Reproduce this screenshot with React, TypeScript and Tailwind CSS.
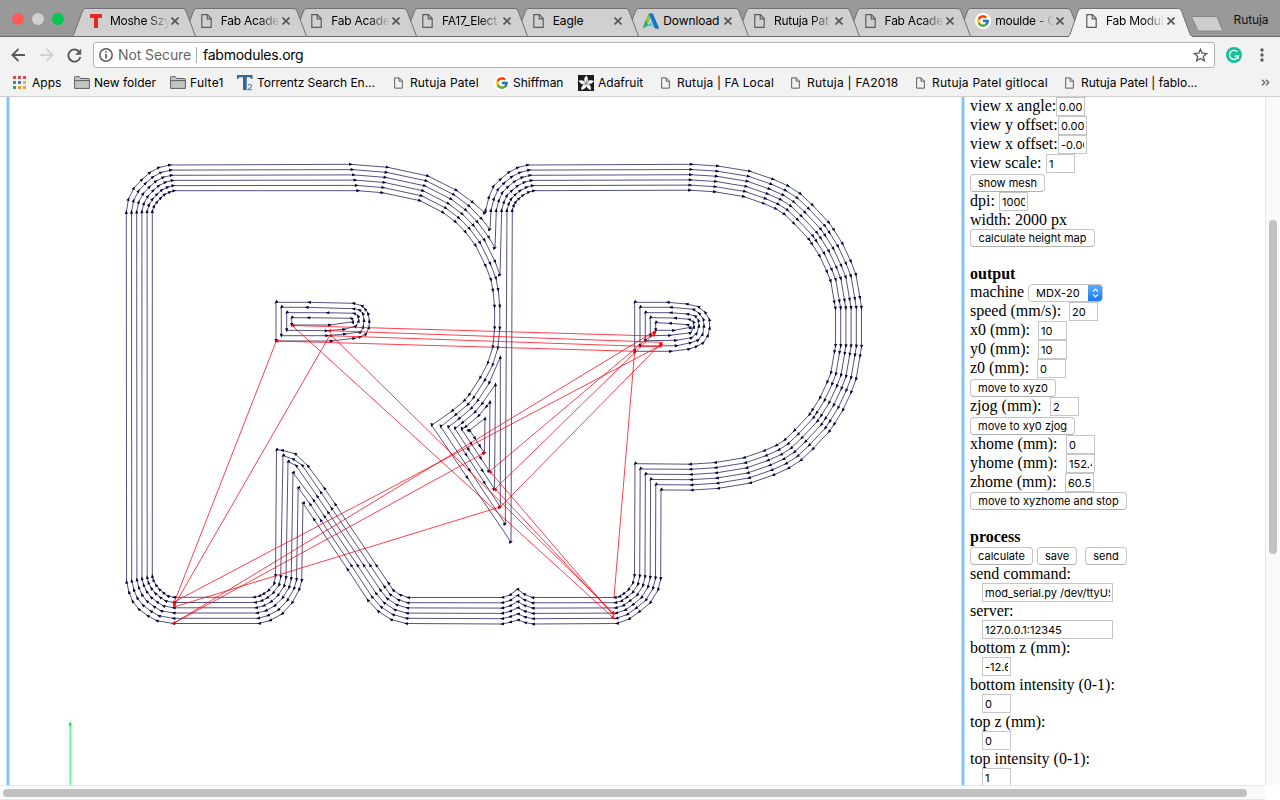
import React from "react";
import { FcGoogle } from "react-icons/fc";

type Pt = [number, number];

/* ---------- tool path geometry ---------- */

const STEP = 5.2;

const lerp = (outer: Pt[], inner: Pt[], k: number): Pt[] =>
  outer.map(([x, y], i) => [x + ((inner[i][0] - x) * k) / 5, y + ((inner[i][1] - y) * k) / 5] as Pt);

// moves every vertex to the left of the direction of travel by d
const offset = (pts: Pt[], d: number): Pt[] =>
  pts.map((p, i) => {
    const a = pts[Math.max(0, i - 1)];
    const b = pts[Math.min(pts.length - 1, i + 1)];
    const dx = b[0] - a[0];
    const dy = b[1] - a[1];
    const l = Math.hypot(dx, dy);
    return [p[0] + (dy / l) * d, p[1] - (dx / l) * d] as Pt;
  });

const topLeftOuter: Pt[] = [[126.3, 212], [128.5, 199], [134, 188], [142, 179.5], [150, 172.5], [159, 167.5], [170, 165], [351, 164.3]];
const topLeftInner: Pt[] = [[152.3, 211], [154.3, 206], [157.3, 201.7], [161, 197.7], [165, 194.3], [170, 192], [174.3, 190.7], [358.3, 190.7]];

const bowl: Pt[] = [
  [382.3, 192.7], [420, 200.7], [443.3, 212.7], [455.7, 222], [465.7, 232.3], [475.7, 245.7], [485.7, 266], [491, 280],
  [493, 290.7], [494.6, 306.7], [494.6, 328.3], [492.7, 347.3], [487.7, 363.3], [480, 378], [469, 395], [464, 401], [452, 411],
];

const notch: Pt[] = [[485, 213], [490, 229.3], [495, 248], [500, 275]];
const islandTop: Pt[] = [[485, 418.3], [490, 401.7], [495.5, 384.3], [500.3, 357]];
const legLeft: Pt[] = [[470, 430.7], [461.7, 429.3], [455, 428.7], [448.3, 427.3], [440.7, 426.7], [431.7, 425.3]];
const legTip: Pt[] = [[484.5, 453], [489.3, 471], [494.5, 489], [500.3, 507], [505.3, 524], [511, 542]];

const pLeftOuter: Pt[] = [[485.7, 210], [489, 197], [493.7, 186], [500.7, 179], [509.3, 172], [518, 167.5], [528, 165]];
const pLeftInner: Pt[] = [[512.3, 210], [514, 205], [516, 201.7], [519.3, 198.3], [523.3, 195], [529, 192], [534, 190.7]];

const pCurve: Pt[] = [
  [691.7, 164.3], [718, 166], [750, 171.3], [773.3, 179.3], [788.3, 186], [800.7, 194], [812.7, 205.3], [829, 222.7],
  [834, 230], [842.7, 244], [851, 261.7], [856, 275], [860, 298], [861.5, 307.7],
];
const pCurveFull: Pt[] = [...pCurve, ...pCurve.map(([x, y]) => [x, 654.4 - y] as Pt).reverse()];

const bottomOuter: Pt[] = [
  [661, 490], [660.7, 579], [658, 590], [650, 603], [639, 612], [629, 619], [617, 623.5],
  [533, 624], [525, 622.5], [518, 620], [510, 622.3], [502, 624], [406, 623.5], [391, 619.5], [378, 611], [367.7, 600],
];
const bottomInner: Pt[] = [
  [635, 463.7], [634.5, 576], [632.7, 583.3], [628.3, 590], [623.3, 594], [619.3, 596.7], [614.7, 597.5],
  [532.3, 597.5], [524, 594], [517.3, 589.3], [510, 595], [502.3, 597.5], [408, 597.5], [400, 594.7], [393, 590], [388.3, 582.7],
];

const diagX = (k: number, y: number) => 303 + 6.28 * k + (y - 503) / 1.485;
const peak: Pt[][] = [
  [[303, 503]],
  [[298.2, 487.7]],
  [[293, 472.7]],
  [[296, 465.5], [288, 461.7]],
  [[302, 465], [293, 459], [283, 455.7]],
  [[307.7, 465.7], [295, 453.7], [282, 450.3], [276.5, 450]],
];

const stemOuter: Pt[] = [[301.7, 581], [299, 590], [292, 603], [282, 614], [270, 620.5], [259, 623.5], [173.3, 623.5], [156.7, 620.7], [147.7, 615.7], [138.7, 609], [132.5, 601], [129, 592], [126.6, 581.7]];
const stemInner: Pt[] = [[275.5, 576], [274, 584], [268.3, 590.7], [263.3, 594], [259.3, 596], [254, 597.3], [174, 597.3], [167.7, 596], [163.3, 592.7], [159.3, 589.3], [156, 585], [153.3, 580], [152.3, 576]];

function outline(k: number): Pt[] {
  const r = offset(bowl, STEP * (5 - k));
  const head = k < 4
    ? [...r.filter(([x, y], i) => i < 9 && y < notch[k][1] - 3 && x < notch[k][0] - 3), notch[k]]
    : [...r, legLeft[k], [(legLeft[k][0] * 0.55 + legTip[k][0] * 0.45), (legLeft[k][1] * 0.55 + legTip[k][1] * 0.45)] as Pt, legTip[k]];
  const ys = k === 0 ? [569, 519] : [565, 524 - 4 * k, 508 - 4 * k];
  const path: Pt[] = [
    ...lerp(topLeftOuter, topLeftInner, k),
    ...head,
    ...lerp(pLeftOuter, pLeftInner, k),
    ...offset(pCurveFull, -STEP * k),
    ...lerp(bottomOuter, bottomInner, k),
    ...ys.map((y) => [diagX(k, y), y] as Pt),
    ...peak[k],
    ...lerp(stemOuter, stemInner, k),
  ];
  return [...path, path[0]];
}

function wedge(k: number): Pt[] {
  const r = offset(bowl, STEP * (5 - k)).filter(([x, y], i) => i > 10 && y > islandTop[k][1] + 4 && x < islandTop[k][0] - 3);
  const l = legLeft[k];
  const t = legTip[k];
  return [
    islandTop[k], ...r, l,
    [l[0] * 0.65 + t[0] * 0.35, l[1] * 0.65 + t[1] * 0.35],
    [l[0] * 0.3 + t[0] * 0.7, l[1] * 0.3 + t[1] * 0.7],
    t, islandTop[k],
  ];
}

const scaled = (ox: number, oy: number, pts: Pt[]): Pt[] => {
  const q = pts.map(([x, y]) => [ox + x / 3, oy + y / 3] as Pt);
  return [...q, q[0]];
};

const holes: Pt[][] = [
  scaled(110, 150, [[498, 573], [665, 573], [733, 565], [752, 560], [768, 552], [777, 532], [778, 512], [774, 490], [765, 477], [755, 467], [730, 460], [597, 457], [498, 457]]),
  scaled(110, 150, [[514, 557], [652, 557], [705, 552], [752, 546], [760, 530], [762, 510], [758, 490], [748, 480], [730, 476], [590, 472], [514, 472]]),
  scaled(110, 150, [[530, 541], [650, 542], [703, 538], [738, 528], [746, 512], [744, 498], [732, 490], [652, 488], [530, 488]]),
  scaled(110, 150, [[545, 525], [660, 525], [730, 515], [724, 505], [595, 503], [545, 503]]),
  scaled(480, 150, [[464, 604], [573, 604], [628, 597], [650, 589], [670, 578], [684, 556], [689, 533], [688, 508], [675, 487], [655, 470], [620, 462], [563, 457], [464, 457]]),
  scaled(480, 150, [[480, 588], [590, 587], [632, 578], [655, 570], [668, 552], [672, 527], [670, 507], [657, 490], [640, 478], [572, 472], [480, 472]]),
  scaled(480, 150, [[496, 572], [588, 571], [635, 563], [650, 550], [657, 527], [655, 510], [645, 498], [622, 492], [572, 488], [496, 488]]),
  scaled(480, 150, [[511, 557], [570, 556], [632, 548], [642, 530], [640, 515], [627, 508], [585, 504], [511, 503]]),
  scaled(480, 150, [[527, 541], [582, 541], [632, 532], [622, 524], [570, 520], [527, 518]]),
];

const cuts: Pt[][] = [...[0, 1, 2, 3, 4, 5].map(outline), ...[0, 1, 2, 3].map(wedge), ...holes];

const jogs: [number, number, number, number][] = [
  [655, 336, 292.3, 325.5], [661.7, 342.3, 329, 330.7], [661.7, 347, 330, 335.7], [634.7, 351.3, 276.3, 341],
  [276.3, 341, 174, 603], [330, 335, 174, 606], [292.3, 325.7, 613.5, 618], [330, 334, 614, 613.5],
  [614, 616, 490, 471.5], [614, 615, 495, 489], [655, 331, 173.3, 623.5], [174, 602, 661.5, 345],
  [173.3, 623.5, 484, 453], [174, 607, 500, 507], [490, 471, 655, 332], [495, 489, 655, 333],
  [500.3, 507, 661.5, 343], [614, 597.5, 634.7, 351.3],
];

const d = (pts: Pt[]) => "M" + pts.map(([x, y]) => `${x.toFixed(1)} ${y.toFixed(1)}`).join("L");

function Toolpath() {
  return (
    <svg className="block h-[688px] w-[951px]" viewBox="10 97 951 688">
      <defs>
        <marker id="cut" viewBox="-4 -2 5 4" markerWidth="4.6" markerHeight="3.8" refX="-1.5" refY="0" orient="auto" markerUnits="userSpaceOnUse">
          <path d="M.6 0L-3.6 1.7V-1.7Z" fill="#000038" />
        </marker>
        <marker id="jog" viewBox="-4 -2 5 4" markerWidth="5" markerHeight="4" refX="-1.5" refY="0" orient="auto" markerUnits="userSpaceOnUse">
          <path d="M.6 0L-3.6 1.7V-1.7Z" fill="#ff0000" />
        </marker>
      </defs>
      {cuts.map((c, i) => (
        <path key={i} d={d(c)} fill="none" stroke="#000048" strokeWidth=".68" markerMid="url(#cut)" markerEnd="url(#cut)" />
      ))}
      {jogs.map(([a, b, x, y], i) => (
        <path key={i} d={`M${a} ${b}L${x} ${y}`} stroke="#ff0010" strokeWidth=".75" markerEnd="url(#jog)" />
      ))}
      <path d="M70.2 785V724" stroke="#00ff48" strokeWidth="1" />
      <path d="M70.2 721.5l1.8 4h-3.6z" fill="#00e83c" />
    </svg>
  );
}

/* ---------- browser chrome ---------- */

const DocIcon = ({ className }: { className: string }) => (
  <svg className={className} viewBox="0 0 11 14" fill="none" stroke="#5c5c5c" strokeWidth="1.2">
    <path d="M.8.7h5.6l3.8 3.8v8.8H.8zM6.2.9v3.9h3.9" />
  </svg>
);

const GoogleIcon = () => (
  <span className="flex size-4 shrink-0 items-center justify-center rounded-full bg-white">
    <FcGoogle className="size-[14px]" />
  </span>
);

const RedT = () => (
  <svg className="h-[14px] w-3 shrink-0" viewBox="0 0 12 14">
    <path d="M0 0h12v4H8v10H4V4H0z" fill="#ea2a1c" />
  </svg>
);

const Autodesk = () => (
  <svg className="h-4 w-4 shrink-0" viewBox="0 0 16 16">
    <path d="M5.500.5L.3 13.500 4.200 12 8 4z" fill="#8ac53f" />
    <path d="M2.800 7L.3 13.500v2L5 12z" fill="#2fae66" />
    <path d="M5.500.5h4.200L16 15.500h-4.400L7 4z" fill="#1484c4" />
    <path d="M7.500.5h2.200L16 15.500h-2.500z" fill="#1d6fc0" />
    <path d="M.3 15.500L8 9.500l1.600 3.500-4-.2z" fill="#32c3e0" />
  </svg>
);

const FolderIcon = () => (
  <svg className="h-[13px] w-4 shrink-0" viewBox="0 0 16 13" fill="#c4c4c4" stroke="#5f5f5f">
    <path d="M.6 12.4V1.5q0-.9.9-.9h3.8l1.2 1.9h8q.9 0 .9.9v9z" />
    <path d="M.6 4.6h14.8" />
  </svg>
);

const AppsIcon = () => (
  <svg className="size-[13px] shrink-0" viewBox="0 0 13 13">
    {["#e8453c", "#e8453c", "#e8453c", "#2f9e60", "#2f7fe0", "#f0b030", "#2f9e60", "#f0a030", "#f0a030"].map((c, i) => (
      <rect key={i} x={(i % 3) * 5} y={Math.floor(i / 3) * 5} width="3" height="3" fill={c} />
    ))}
  </svg>
);

const TorrentzIcon = () => (
  <svg className="h-4 w-4 shrink-0" viewBox="0 0 16 16" fill="#336699">
    <path d="M0 0h15.5v4h-1L13 2.2H9.7V15H6V2.2H2.5L1 4H0z" />
    <path d="M11 10.8q0-1.5 1.8-1.5t1.8 1.4q0 1-1.8 2.4L11 14.6h4" fill="none" stroke="#5b87b0" strokeWidth="1.1" />
  </svg>
);

const AdafruitIcon = () => (
  <svg className="size-4 shrink-0" viewBox="0 0 16 16">
    <path d="M0 0h16v16H0z" fill="#1c1c1c" />
    {[0, 72, 144, 216, 288].map((a) => (
      <path key={a} d="M8.2 8.6Q4.6 4.5 8.4.8 11 4 8.2 8.6z" fill="#fff" transform={`rotate(${a} 8.2 8.4)`} stroke="#fff" strokeWidth=".6" />
    ))}
    <path d="M8.2 8.4L8.3 5.5M8.2 8.4l2.6-.8M8.2 8.4l1.6 2.2M8.2 8.4l-1.6 2.2M8.2 8.4l-2.6-.8" stroke="#444" strokeWidth=".6" />
  </svg>
);

const tabDoc = <DocIcon className="h-[14px] w-[11px]" />;

const tabs: { icon: React.ReactNode; label: string }[] = [
  { icon: <RedT />, label: "Moshe Szy" },
  { icon: tabDoc, label: "Fab Acade" },
  { icon: tabDoc, label: "Fab Acade" },
  { icon: tabDoc, label: "FA17_Elect" },
  { icon: tabDoc, label: "Eagle" },
  { icon: <Autodesk />, label: "Download" },
  { icon: tabDoc, label: "Rutuja Pat" },
  { icon: tabDoc, label: "Fab Acade" },
  { icon: <GoogleIcon />, label: "moulde - G" },
  { icon: tabDoc, label: "Fab Modul" },
];

function TabStrip() {
  return (
    <div className="flex h-[37px] items-end border-b border-[#6c6c6c] bg-[#999999]">
      <div className="flex w-[72px] shrink-0 gap-[8px] self-start pt-[13px] pl-[12px]">
        <i className="size-3 rounded-full bg-[#fc5b57]" />
        <i className="size-3 rounded-full bg-[#d0d0d0]" />
        <i className="size-3 rounded-full bg-[#00c94f]" />
      </div>
      {tabs.map((t, i) => {
        const active = i === tabs.length - 1;
        return (
          <div key={i} className={active ? "relative z-20 -mb-px flex h-[29px] w-[110.66px] shrink-0" : "relative flex h-7 w-[110.66px] shrink-0"} style={active ? undefined : { zIndex: 10 - i }}>
            <svg className="absolute top-0 left-0 h-full w-[125px]" viewBox={active ? "0 0 125 29" : "0 0 125 28"}>
              <path
                d={active ? "M0 29Q1.500 27.500 2 26.500L10 3Q11 .5 13 .5H110.500Q112.500 .5 113.500 3L122 26Q123 28.500 125 29Z" : "M0 29L1.500 27L10.500 3Q11.500 .5 13.500 .5H111Q113 .5 114 3L123 27L124.500 29"}
                fill={active ? "#f2f2f2" : "#d0d0d0"}
                stroke="#707070"
                strokeWidth="1"
              />
              {active && <path d="M1 28.500H124" stroke="#f2f2f2" />}
            </svg>
            <div className="relative flex h-7 w-full items-center pb-0.5 pl-[17px]">
              <span className="flex w-[21px] shrink-0 justify-start pl-px">{t.icon}</span>
              <span
                className={
                  t.label === "Eagle" || t.label === "Download"
                    ? "w-[61px] shrink-0 text-[12px] tracking-[-0.1px] whitespace-nowrap text-black"
                    : "w-[61px] shrink-0 [mask-image:linear-gradient(to_right,#000_62%,transparent_97%)] text-[12px] tracking-[-0.25px] whitespace-nowrap text-black"
                }
              >
                {t.label}
              </span>
              <svg className="size-2 shrink-0" viewBox="0 0 8 8" stroke="#555" strokeWidth="1.6"><path d="M.5.5l7 7M7.500.5l-7 7" /></svg>
            </div>
          </div>
        );
      })}
      <svg className="mb-[4px] ml-[12px] h-4 w-8 shrink-0" viewBox="0 0 32 16">
        <path d="M2 .5h22.500q1.500 0 2 1.200l4.800 12q.5 1.400-1 1.400H8.500q-1.500 0-2-1.300L1 2Q.6.600 2 .5z" fill="#cdcdcd" stroke="#858585" />
      </svg>
      <span className="ml-[11px] self-start pt-[11px] text-[12px] tracking-[-0.1px] text-[#111]">Rutuja</span>
    </div>
  );
}

function Toolbar() {
  return (
    <div className="flex h-8 items-center bg-[#f2f2f2] pt-[4px]">
      <svg className="ml-[11px] h-[14px] w-[15px]" viewBox="0 0 15 14" fill="none" stroke="#5a5a5a" strokeWidth="1.900"><path d="M14 7H1.500M7.500 .8L1.400 7l6.100 6.200" /></svg>
      <svg className="ml-[13px] h-[14px] w-[15px]" viewBox="0 0 15 14" fill="none" stroke="#d2d2d2" strokeWidth="1.900"><path d="M1 7h12.500M7.500 .8L13.600 7l-6.100 6.200" /></svg>
      <svg className="ml-[13px] h-[15px] w-[15px]" viewBox="0 0 15 15"><path d="M12.600 4.200A6.100 6.100 0 1 0 13.400 9" fill="none" stroke="#5a5a5a" strokeWidth="1.900" /><path d="M14.200 .8v6H8.200z" fill="#5a5a5a" /></svg>
      <div className="ml-[11px] flex h-[26px] w-[1122px] shrink-0 items-center rounded-[3px] border border-[#b4b4b4] bg-white pl-[5px] text-[14px]">
        <svg className="size-[14px] shrink-0" viewBox="0 0 14 14" fill="none" stroke="#5a5a5a" strokeWidth="1.500"><circle cx="7" cy="7" r="6.200" /><path d="M7 6v4.500M7 3.300v1.500" strokeWidth="1.700" /></svg>
        <span className="ml-[5px] w-[73px] shrink-0 pb-px tracking-[-0.1px] whitespace-nowrap text-[#666]">Not Secure</span>
        <i className="ml-[5px] h-4 w-px bg-[#aaa]" />
        <span className="ml-[6px] pb-px tracking-[-0.25px] text-black">fabmodules.org</span>
        <svg className="mr-[6px] ml-auto h-[14px] w-[15px]" viewBox="0 0 15 14" fill="none" stroke="#5a5a5a" strokeWidth="1.300"><path d="M7.500 1.200l1.700 4 4.500.4-3.400 2.900 1 4.300-3.800-2.300-3.800 2.300 1-4.300L1.300 5.600l4.500-.4z" /></svg>
      </div>
      <svg className="ml-[11px] size-4" viewBox="0 0 16 16"><circle cx="8" cy="8" r="8" fill="#15c39a" /><path d="M11.200 4.700A4.500 4.500 0 1 0 12.400 9H8.800M12.300 8.600v3" fill="none" stroke="#fff" strokeWidth="1.400" /></svg>
      <svg className="ml-[18px] h-[14px] w-1" viewBox="0 0 4 14" fill="#5a5a5a"><circle cx="2" cy="2" r="1.700" /><circle cx="2" cy="7" r="1.700" /><circle cx="2" cy="12" r="1.700" /></svg>
    </div>
  );
}

const smallDoc = <DocIcon className="h-3 w-[9px] shrink-0" />;

const bookmarks: { icon: React.ReactNode; label: string; box: string }[] = [
  { icon: <AppsIcon />, label: "Apps", box: "w-[61px] gap-[6px]" },
  { icon: <FolderIcon />, label: "New folder", box: "w-[96px] gap-1" },
  { icon: <FolderIcon />, label: "Fulte1", box: "w-[67px] gap-1 tracking-[0.25px]" },
  { icon: <TorrentzIcon />, label: "Torrentz Search En...", box: "w-[157px] gap-1 tracking-[-0.05px]" },
  { icon: smallDoc, label: "Rutuja Patel", box: "w-[100px] gap-[7px] tracking-[0.15px]" },
  { icon: <GoogleIcon />, label: "Shiffman", box: "w-[84px] gap-[3px]" },
  { icon: <AdafruitIcon />, label: "Adafruit", box: "w-[83px] gap-1" },
  { icon: smallDoc, label: "Rutuja | FA Local", box: "w-[130px] gap-[7px] tracking-[0.15px]" },
  { icon: smallDoc, label: "Rutuja | FA2018", box: "w-[125px] gap-[7px] tracking-[0.25px]" },
  { icon: smallDoc, label: "Rutuja Patel gitlocal", box: "w-[149px] gap-[7px] tracking-[0.22px]" },
  { icon: smallDoc, label: "Rutuja Patel | fablo...", box: "w-[197px] gap-[7px]" },
];

function Bookmarks() {
  return (
    <div className="flex h-7 items-center border-b border-[#cfcfcf] bg-[#f2f2f2] pl-[13px] text-[12px] text-black">
      {bookmarks.map((b) => (
        <div key={b.label} className={`flex shrink-0 items-center whitespace-nowrap ${b.box}`}>
          {b.icon}
          <span>{b.label}</span>
        </div>
      ))}
      <svg className="-ml-px h-[7px] w-[9px] shrink-0" viewBox="0 0 9 7" fill="none" stroke="#666" strokeWidth="1.300"><path d="M1 .7l2.800 2.800L1 6.300M5 .7l2.800 2.800L5 6.300" /></svg>
    </div>
  );
}

/* ---------- settings column ---------- */

const Field = ({ label, box, value, wide }: { label?: string; box: string; value: string; wide?: boolean }) => (
  <div className="flex h-[19px] shrink-0 items-start">
    <span className={`shrink-0 whitespace-pre ${box}`}>{label}</span>
    <span className={`flex h-[19px] shrink-0 items-center border border-[#c6c6c6] bg-white px-[2px] font-[Inter,sans-serif] text-[11px] ${wide ? "w-[131px]" : "w-[29px]"}`}>
      <span className="w-full overflow-hidden pt-px leading-[15px] whitespace-nowrap">{value}</span>
    </span>
  </div>
);

const Line = ({ children, bold }: { children?: React.ReactNode; bold?: boolean }) => (
  <div className={`h-[18px] shrink-0 leading-[18px] ${bold ? "font-bold" : ""}`}>{children}</div>
);

const Btn = ({ children, w }: { children: React.ReactNode; w: string }) => (
  <button className={`h-[18px] shrink-0 rounded-[4px] border border-[#c4c4c4] border-b-[#b0b0b0] bg-white font-[Inter,sans-serif] text-[11px] leading-4 whitespace-nowrap ${w}`}>{children}</button>
);

const BtnRow = ({ children, short }: { children: React.ReactNode; short?: boolean }) => (
  <div className={`flex shrink-0 items-end ${short ? "h-[18px]" : "h-[19px]"}`}>{children}</div>
);

function Settings() {
  return (
    <div className="flex flex-1 flex-col overflow-hidden pl-[5px] font-['Liberation_Serif',serif] text-[16px] leading-[18px] text-black">
      <Field label="view x angle:" box="w-[86px]" value="0.00" />
      <Field label="view y offset:" box="w-[88px]" value="0.00" />
      <Field label="view x offset:" box="w-[88px]" value="-0.00" />
      <Field label="view scale:" box="w-[76px]" value="1" />
      <BtnRow><Btn w="w-[75px]">show mesh</Btn></BtnRow>
      <Field label="dpi:" box="w-[29px]" value="1000" />
      <Line>width: 2000 px</Line>
      <BtnRow short><Btn w="w-[125px]">calculate height map</Btn></BtnRow>
      <Line />
      <Line bold>output</Line>
      <div className="flex h-[19px] shrink-0 items-start">
        <span className="w-[58px] shrink-0">machine</span>
        <span className="mt-px flex h-[18px] w-[75px] items-center justify-between overflow-hidden rounded-[4px] border border-[#c4c4c4] bg-white pl-[7px] font-[Inter,sans-serif] text-[11px] tracking-[0.15px]">
          MDX-20
          <span className="-mr-px flex h-[18px] w-[15px] items-center justify-center bg-gradient-to-b from-[#5fb0fb] to-[#0a74f5]">
            <svg className="h-[10px] w-[7px]" viewBox="0 0 7 10" fill="none" stroke="#fff" strokeWidth="1.200"><path d="M1 3.700L3.500 1.200 6 3.700M1 6.300l2.500 2.500L6 6.300" /></svg>
          </span>
        </span>
      </div>
      <Field label="speed (mm/s):" box="w-[99px]" value="20" />
      <Field label="x0 (mm):" box="w-[68px]" value="10" />
      <Field label="y0 (mm):" box="w-[68px]" value="10" />
      <Field label="z0 (mm):" box="w-[67px]" value="0" />
      <BtnRow><Btn w="w-[86px]">move to xyz0</Btn></BtnRow>
      <Field label="zjog (mm):" box="w-[80px]" value="2" />
      <BtnRow><Btn w="w-[105px]">move to xy0 zjog</Btn></BtnRow>
      <Field label="xhome (mm):" box="w-[96px]" value="0" />
      <Field label="yhome (mm):" box="w-[96px]" value="152.4" />
      <Field label="zhome (mm):" box="w-[95px]" value="60.5" />
      <BtnRow short><Btn w="w-[157px]">move to xyzhome and stop</Btn></BtnRow>
      <Line />
      <Line bold>process</Line>
      <BtnRow>
        <Btn w="w-[63px]">calculate</Btn>
        <span className="w-1" />
        <Btn w="w-[40px]">save</Btn>
        <span className="w-2" />
        <Btn w="w-[42px]">send</Btn>
      </BtnRow>
      <Line>send command:</Line>
      <Field box="w-3" value="mod_serial.py /dev/ttyUSB0" wide />
      <Line>server:</Line>
      <Field box="w-3" value="127.0.0.1:12345" wide />
      <Line>bottom z (mm):</Line>
      <Field box="w-3" value="-12.6" />
      <Line>bottom intensity (0-1):</Line>
      <Field box="w-3" value="0" />
      <Line>top z (mm):</Line>
      <Field box="w-3" value="0" />
      <Line>top intensity (0-1):</Line>
      <Field box="w-3" value="1" />
    </div>
  );
}

export default function App() {
  return (
    <div className="flex h-[800px] w-[1280px] flex-col overflow-hidden bg-white font-[Inter,sans-serif]">
      <TabStrip />
      <Toolbar />
      <Bookmarks />
      <div className="flex h-[688px] shrink-0">
        <div className="ml-[6px] w-1 shrink-0 border-x border-[#c4e2ff] bg-[#80c1ff]" />
        <Toolpath />
        <div className="w-1 shrink-0 border-x border-[#c4e2ff] bg-[#80c1ff]" />
        <Settings />
        <div className="w-[15px] shrink-0 border-l border-[#e6e6e6] bg-[#fafafa] pt-[123px] pl-[3px]">
          <div className="h-[334px] w-2 rounded-full bg-[#c1c1c1]" />
        </div>
      </div>
      <div className="h-[15px] w-[1265px] shrink-0 border-y border-[#e6e6e6] bg-[#fafafa] pt-[3px] pl-[3px]">
        <div className="h-2 w-[1244px] rounded-full bg-[#c1c1c1]" />
      </div>
    </div>
  );
}
